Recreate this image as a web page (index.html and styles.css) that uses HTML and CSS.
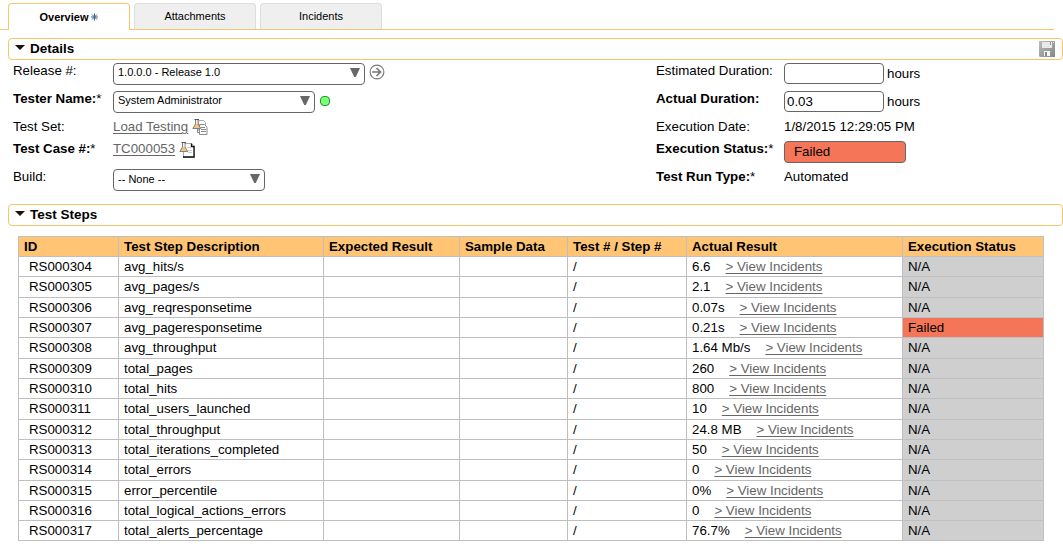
FILE: index.html
```
<!DOCTYPE html>
<html lang="en">
<head>
<meta charset="utf-8">
<title>Test Run</title>
<link rel="stylesheet" href="styles.css">
</head>
<body>
<nav class="tabs">
  <div class="tab active"><span class="tab-text">Overview</span><svg class="star" width="7" height="8" viewBox="0 0 7 8"><path d="M3.5 .5v7M0 4h7M1 1.5l5 5M6 1.5l-5 5" stroke="#3b608f" stroke-width="1"/></svg></div>
  <div class="tab">Attachments</div>
  <div class="tab">Incidents</div>
</nav>

<header class="section">
  <svg class="caret" width="10" height="5" viewBox="0 0 10 5"><path d="M0 0h10L5 5z" fill="#1c1208"/></svg>
  <h2>Details</h2>
  <svg class="save" width="16" height="16" viewBox="0 0 16 16">
    <defs><linearGradient id="disk" x1="0" y1="0" x2="1" y2="1"><stop offset="0" stop-color="#bdbdbd"/><stop offset="1" stop-color="#858585"/></linearGradient></defs>
    <path d="M0 0h16v16H1l-1-1z" fill="url(#disk)"/>
    <path d="M3 1h10v6H3z" fill="#e9e9e9"/><path d="M11 1h1v3h-1z" fill="#999"/><path d="M14 1h1v1h-1z" fill="#eee"/>
    <path d="M5 10h6v5H5z" fill="#f4f4f4"/><path d="M6 11h2v4H6z" fill="#8a8a8a"/>
  </svg>
</header>

<section class="details">
  <div class="fields">
    <label>Release #:</label>
    <div class="value"><div class="select wide"><span>1.0.0.0 - Release 1.0</span><svg class="arrow" width="10" height="9" viewBox="0 0 10 9"><path d="M0 0h10L5.8 9H4.2z" fill="#686868"/></svg></div><svg class="go" width="16" height="16" viewBox="0 0 16 16" fill="none" stroke="#777"><circle cx="8" cy="8" r="6.9" stroke-width="1.1"/><path d="M3 8h8.5M7.500 4l4 4-4 4" stroke-width="1.7"/></svg></div>
    <label class="req">Tester Name:<i>*</i></label>
    <div class="value"><div class="select medium"><span>System Administrator</span><svg class="arrow" width="10" height="9" viewBox="0 0 10 9"><path d="M0 0h10L5.8 9H4.2z" fill="#686868"/></svg></div><b class="online"></b></div>
    <label>Test Set:</label>
    <div class="value"><a>Load Testing</a><svg class="doc" width="16" height="17" viewBox="0 0 16 17"><path d="M6.500 1.500h5l2 2v9h-7z" fill="#fff" stroke="#aaa"/><path d="M5.500 9.500v4h2M7.500 5.500h5l2.500 2.500v7.500h-7.500z" fill="#fff" stroke="#8c8c8c"/><path d="M9 8.500h4M9 10.500h5M9 12.500h5" stroke="#888"/><path d="M3.500 1v4L.8 9.500h8L6 5V1z" fill="#f4c47e" stroke="#777" stroke-width=".9"/><path d="M2.500 .5h4.500" stroke="#555"/><path d="M4 1h1.500v4H4z" fill="#eef1f4"/></svg></div>
    <label class="req">Test Case #:<i>*</i></label>
    <div class="value"><a>TC000053</a><svg class="doc low" width="16" height="17" viewBox="0 0 16 17"><path d="M4.500 1.500h8l3 3v11h-11z" fill="#fff" stroke="#aaa"/><path d="M12.500 1.500v3h2.500v10.500H4" fill="none" stroke="#111" stroke-width="1.300"/><path d="M8 5.500h4M9 8.500h4M9 10.500h4" stroke="#ccc"/><path d="M3.500 1v4L.8 9.500h8L6 5V1z" fill="#f4c47e" stroke="#777" stroke-width=".9"/><path d="M2.500 .5h4.500" stroke="#555"/><path d="M4 1h1.500v4H4z" fill="#eef1f4"/></svg></div>
    <label>Build:</label>
    <div class="value"><div class="select narrow"><span>-- None --</span><svg class="arrow" width="10" height="9" viewBox="0 0 10 9"><path d="M0 0h10L5.8 9H4.2z" fill="#686868"/></svg></div></div>
  </div>
  <div class="fields right">
    <label>Estimated Duration:</label>
    <div class="value"><div class="input"></div><span class="unit">hours</span></div>
    <label class="req">Actual Duration:</label>
    <div class="value"><div class="input">0.03</div><span class="unit">hours</span></div>
    <label>Execution Date:</label>
    <div class="value date">1/8/2015 12:29:05 PM</div>
    <label class="req">Execution Status:<i>*</i></label>
    <div class="value"><div class="status">Failed</div></div>
    <label class="req">Test Run Type:<i>*</i></label>
    <div class="value">Automated</div>
  </div>
</section>

<header class="section">
  <svg class="caret" width="10" height="5" viewBox="0 0 10 5"><path d="M0 0h10L5 5z" fill="#1c1208"/></svg>
  <h2>Test Steps</h2>
</header>

<table class="steps">
  <colgroup><col class="c-id"><col class="c-desc"><col class="c-exp"><col class="c-sample"><col class="c-step"><col class="c-actual"><col class="c-status"></colgroup>
  <thead><tr><th>ID</th><th>Test Step Description</th><th>Expected Result</th><th>Sample Data</th><th>Test # / Step #</th><th>Actual Result</th><th>Execution Status</th></tr></thead>
  <tbody>
    <tr><td>RS000304</td><td>avg_hits/s</td><td></td><td></td><td>/</td><td>6.6<a>&gt; View Incidents</a></td><td>N/A</td></tr>
    <tr><td>RS000305</td><td>avg_pages/s</td><td></td><td></td><td>/</td><td>2.1<a>&gt; View Incidents</a></td><td>N/A</td></tr>
    <tr><td>RS000306</td><td>avg_reqresponsetime</td><td></td><td></td><td>/</td><td>0.07s<a>&gt; View Incidents</a></td><td>N/A</td></tr>
    <tr><td>RS000307</td><td>avg_pageresponsetime</td><td></td><td></td><td>/</td><td>0.21s<a>&gt; View Incidents</a></td><td class="failed">Failed</td></tr>
    <tr><td>RS000308</td><td>avg_throughput</td><td></td><td></td><td>/</td><td>1.64 Mb/s<a>&gt; View Incidents</a></td><td>N/A</td></tr>
    <tr><td>RS000309</td><td>total_pages</td><td></td><td></td><td>/</td><td>260<a>&gt; View Incidents</a></td><td>N/A</td></tr>
    <tr><td>RS000310</td><td>total_hits</td><td></td><td></td><td>/</td><td>800<a>&gt; View Incidents</a></td><td>N/A</td></tr>
    <tr><td>RS000311</td><td>total_users_launched</td><td></td><td></td><td>/</td><td>10<a>&gt; View Incidents</a></td><td>N/A</td></tr>
    <tr><td>RS000312</td><td>total_throughput</td><td></td><td></td><td>/</td><td>24.8 MB<a>&gt; View Incidents</a></td><td>N/A</td></tr>
    <tr><td>RS000313</td><td>total_iterations_completed</td><td></td><td></td><td>/</td><td>50<a>&gt; View Incidents</a></td><td>N/A</td></tr>
    <tr><td>RS000314</td><td>total_errors</td><td></td><td></td><td>/</td><td>0<a>&gt; View Incidents</a></td><td>N/A</td></tr>
    <tr><td>RS000315</td><td>error_percentile</td><td></td><td></td><td>/</td><td>0%<a>&gt; View Incidents</a></td><td>N/A</td></tr>
    <tr><td>RS000316</td><td>total_logical_actions_errors</td><td></td><td></td><td>/</td><td>0<a>&gt; View Incidents</a></td><td>N/A</td></tr>
    <tr><td>RS000317</td><td>total_alerts_percentage</td><td></td><td></td><td>/</td><td>76.7%<a>&gt; View Incidents</a></td><td>N/A</td></tr>
  </tbody>
</table>
</body>
</html>
```
FILE: styles.css
```
* { box-sizing: border-box; }
body { margin: 0; height: 554px; overflow: hidden; background: #fff; color: #000; font: 13.3px/15px "Liberation Sans", Arial, sans-serif; }
svg { display: block; flex: none; }
a { color: #666; text-decoration: underline; text-underline-offset: 2px; text-decoration-thickness: 1px; }

.tabs { display: flex; gap: 4px; height: 30px; padding: 3px 0 0 8px; margin-right: 9px; border-bottom: 1px solid #fbc56d; font-size: 11px; }
.tab { display: flex; justify-content: center; align-items: center; width: 122px; height: 26px; border: 1px solid #ddd; border-bottom: 0; border-radius: 4px 4px 0 0; background: #efefef; }
.tab.active { height: 27px; background: #fff; border-color: #fbc56d; font-weight: bold; }
.star { margin-left: 3px; }

.section { display: flex; align-items: center; height: 22px; margin: 8px 0 0 8px; padding: 0 7px 0 6px; border: 1px solid #f7c569; border-radius: 4px; }
.section h2 { flex: 1; margin: 0 0 0 5px; font-size: 13.5px; line-height: 18px; }
.caret { margin-top: -3px; }

.details { display: flex; height: 136px; padding: 3px 0 0 13px; }
.fields { display: grid; grid-template-columns: 100px 543px; grid-template-rows: 28px 28px 22px 28px 28px; }
.fields.right { grid-template-columns: 128px 270px; }
.fields label { white-space: nowrap; }
.req { font-weight: bold; }
.req i { font-style: normal; font-weight: normal; }
.value { display: flex; align-items: flex-start; }
.select { display: flex; justify-content: space-between; height: 22px; padding: 0 4px; border: 1px solid #666; border-radius: 4px; font-size: 11px; line-height: 17px; }
.wide { width: 252px; }
.medium { width: 202px; }
.narrow { width: 152px; }
.narrow span { padding-top: 1px; }
.arrow { margin-top: 4px; }
.go { margin: 1px 0 0 4px; }
.online { width: 10px; height: 10px; margin: 5px 0 0 5px; border: 1px solid #159a25; border-radius: 4px; background: #80ff7c; }
.doc { margin: 0 0 0 4px; }
.doc.low { margin-top: 1px; }
.input { width: 100px; height: 21px; padding: 2px 2px 0; border: 1px solid #666; border-radius: 4px; }
.unit { margin: 3px 0 0 3px; }
.status { width: 122px; height: 22px; padding: 2px 9px; border: 1px solid #666; border-radius: 4px; background: #f47558; }

.steps { width: 1026px; margin: 10px 0 0 18px; border-collapse: collapse; table-layout: fixed; }
.c-id { width: 100px; }
.c-desc { width: 205px; }
.c-exp { width: 136px; }
.c-sample { width: 108px; }
.c-step { width: 119px; }
.c-actual { width: 216px; }
.c-status { width: 141px; }
.steps tr { height: 20px; }
.steps tbody tr:nth-child(3n+2):not(:last-child) { height: 21px; }
.steps th, .steps td { padding: 2px 5px 0; border: 1px solid #bfbfbf; text-align: left; vertical-align: top; white-space: nowrap; }
.steps th { background: #ffc575; }
.steps td:first-child { padding-left: 10px; }
.steps td:last-child { background: #cfcfcf; }
.steps td.failed { background: #f47558; }
.steps a { margin-left: 15px; }
```
